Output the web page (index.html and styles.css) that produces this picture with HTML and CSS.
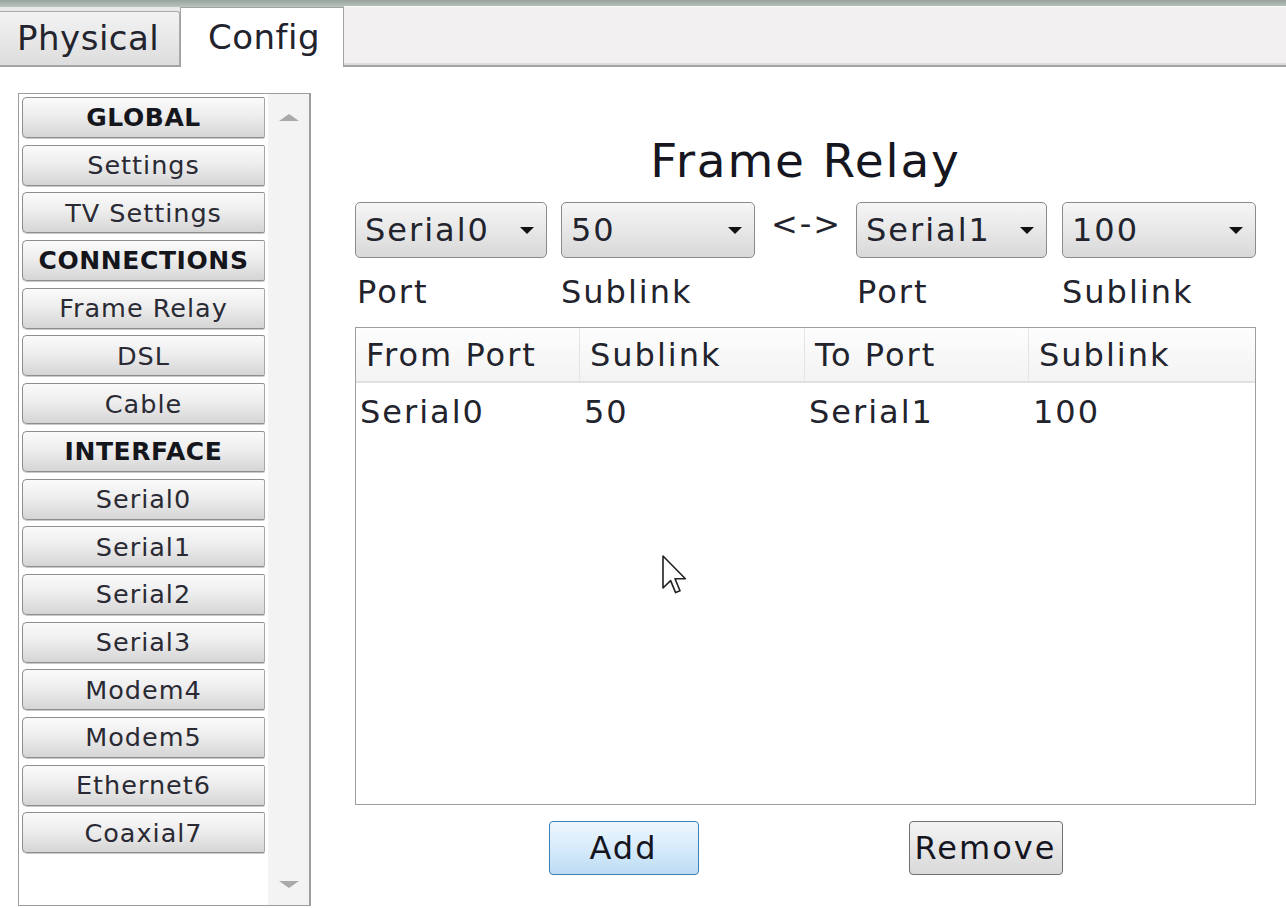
FILE: index.html
```html
<!DOCTYPE html>
<html lang="en">
<head>
<meta charset="utf-8">
<title>Frame Relay - Config</title>
<link rel="stylesheet" href="styles.css">
</head>
<body>
<div class="window">
  <div class="topbar"></div>
  <div class="tabs">
    <div class="tab tab-inactive">Physical</div>
    <div class="tab tab-active">Config</div>
    <div class="tab-filler"></div>
  </div>
  <div class="content">
    <aside class="sidebar">
      <div class="side-list">
        <div class="side-btn head">GLOBAL</div>
        <div class="side-btn">Settings</div>
        <div class="side-btn">TV Settings</div>
        <div class="side-btn head">CONNECTIONS</div>
        <div class="side-btn">Frame Relay</div>
        <div class="side-btn">DSL</div>
        <div class="side-btn">Cable</div>
        <div class="side-btn head">INTERFACE</div>
        <div class="side-btn">Serial0</div>
        <div class="side-btn">Serial1</div>
        <div class="side-btn">Serial2</div>
        <div class="side-btn">Serial3</div>
        <div class="side-btn">Modem4</div>
        <div class="side-btn">Modem5</div>
        <div class="side-btn">Ethernet6</div>
        <div class="side-btn">Coaxial7</div>
      </div>
      <div class="scrollbar">
        <svg class="sb-arrow" width="20" height="7" viewBox="0 0 20 7"><polygon points="10,0 20,7 0,7" fill="#a9a9a9"/></svg>
        <svg class="sb-arrow" width="20" height="7" viewBox="0 0 20 7"><polygon points="0,0 20,0 10,7" fill="#a9a9a9"/></svg>
      </div>
    </aside>
    <main class="panel">
      <h1 class="title">Frame Relay</h1>
      <div class="combo-row">
        <div class="combo w1"><span>Serial0</span><svg class="drop" width="14" height="7" viewBox="0 0 14 7"><polygon points="0,0 14,0 7,7" fill="#111"/></svg></div>
        <div class="combo w2"><span>50</span><svg class="drop" width="14" height="7" viewBox="0 0 14 7"><polygon points="0,0 14,0 7,7" fill="#111"/></svg></div>
        <div class="link-arrow">&lt;-&gt;</div>
        <div class="combo w3"><span>Serial1</span><svg class="drop" width="14" height="7" viewBox="0 0 14 7"><polygon points="0,0 14,0 7,7" fill="#111"/></svg></div>
        <div class="combo w4"><span>100</span><svg class="drop" width="14" height="7" viewBox="0 0 14 7"><polygon points="0,0 14,0 7,7" fill="#111"/></svg></div>
      </div>
      <div class="label-row">
        <span class="lbl w1">Port</span>
        <span class="lbl w2">Sublink</span>
        <span class="lbl spacer"></span>
        <span class="lbl w3">Port</span>
        <span class="lbl w4">Sublink</span>
      </div>
      <div class="grid-table">
        <div class="gt-head">
          <div class="th">From Port</div>
          <div class="th">Sublink</div>
          <div class="th">To Port</div>
          <div class="th">Sublink</div>
        </div>
        <div class="gt-row">
          <div class="td">Serial0</div>
          <div class="td">50</div>
          <div class="td">Serial1</div>
          <div class="td">100</div>
        </div>
      </div>
      <div class="actions">
        <div class="btn btn-add">Add</div>
        <div class="btn btn-remove">Remove</div>
      </div>
    </main>
  </div>
  <svg class="cursor" width="26" height="40" viewBox="0 0 13 20"><path d="M0.5,0.5 L0.5,16.5 L4.3,12.8 L6.8,18.8 L9,17.9 L6.5,11.9 L11.7,11.9 Z" fill="#fff" stroke="#222" stroke-width="0.8" stroke-linejoin="round"/></svg>
</div>
</body>
</html>
```

FILE: styles.css
```css
* { box-sizing: border-box; }

html, body {
  margin: 0;
  padding: 0;
  background: #ffffff;
}

body {
  width: 1286px;
  height: 908px;
  overflow: hidden;
  font-family: "DejaVu Sans", Verdana, sans-serif;
  color: #1d1d26;
}

.window {
  position: relative;
  width: 1286px;
  height: 908px;
  background: #ffffff;
}

.topbar {
  height: 7px;
  background: linear-gradient(#97a39c, #b9c4be);
}

.tabs {
  display: flex;
  align-items: flex-end;
  height: 60px;
  background: #e9e9e9;
  border-bottom: 2px solid #a3a3a3;
}

.tab {
  font-size: 34px;
  letter-spacing: 0.5px;
  color: #22232c;
}

.tab-inactive {
  width: 180px;
  height: 54px;
  padding: 6px 0 0 17px;
  background: linear-gradient(#f3f3f3, #dddddd);
  border: 1px solid #a9a9a9;
  border-left: none;
  border-bottom: none;
  border-radius: 0 3px 0 0;
}

.tab-active {
  width: 164px;
  height: 60px;
  margin-bottom: -2px;
  padding: 9px 0 0 27px;
  background: #ffffff;
  border: 1px solid #a3a3a3;
  border-bottom: none;
}

.tab-filler {
  flex: 1;
  height: 59px;
  background: #f2f0f1;
  border-top: 1px solid #fbfbfb;
  border-bottom: 2px solid #dddddd;
}

.content {
  display: flex;
  padding: 26px 0 0 18px;
}

/* Sidebar */
.sidebar {
  display: flex;
  width: 293px;
  height: 813px;
  border: 1px solid #9d9d9d;
  border-right-width: 2px;
  background: #ffffff;
}

.side-list {
  width: 249px;
  padding: 3px 0 0 3px;
}

.side-btn {
  width: 243px;
  height: 41px;
  margin-bottom: 6.7px;
  display: flex;
  align-items: center;
  justify-content: center;
  font-size: 25.5px;
  letter-spacing: 1px;
  color: #2a2a34;
  background: linear-gradient(#fafafa 0%, #eeeeee 45%, #d5d5d5 100%);
  border: 1px solid #8e8e8e;
  border-right-color: #a7a7a7;
  border-radius: 5px 2px 2px 5px;
  box-shadow: 0 1px 0 #c9c9c9;
}

.side-btn.head {
  font-size: 25px;
  font-weight: bold;
  letter-spacing: 0.6px;
  color: #15151c;
}

.scrollbar {
  flex: 1;
  display: flex;
  flex-direction: column;
  justify-content: space-between;
  align-items: center;
  padding: 20px 0 17px 0;
  background: #f3f3f3;
}

.sb-arrow { display: block; }

/* Main panel */
.panel {
  width: 901px;
  margin-left: 44px;
  display: flex;
  flex-direction: column;
}

.title {
  margin: 38px 0 0 0;
  height: 61px;
  line-height: 60px;
  text-align: center;
  font-size: 47px;
  font-weight: normal;
  letter-spacing: 1.8px;
  color: #161620;
}

.combo-row {
  display: flex;
  margin-top: 10px;
  height: 56px;
}

.w1 { width: 192px; margin-right: 14px; }
.w2 { width: 194px; }
.w3 { width: 191px; margin-right: 15px; }
.w4 { width: 194px; }

.combo {
  display: flex;
  align-items: center;
  justify-content: space-between;
  height: 56px;
  padding: 0 12px 0 9px;
  font-size: 32px;
  letter-spacing: 2px;
  color: #22232c;
  background: linear-gradient(#f6f6f6, #e6e6e6 55%, #d8d8d8);
  border: 1px solid #8b8b8b;
  border-radius: 5px;
}

.drop { display: block; flex: none; }

.link-arrow {
  width: 69px;
  margin: 0 16px;
  height: 44px;
  line-height: 44px;
  font-size: 32px;
  letter-spacing: 2px;
  text-align: center;
  color: #22232c;
  white-space: nowrap;
}

.label-row {
  display: flex;
  margin-top: 14px;
  height: 40px;
  line-height: 40px;
  font-size: 32px;
  letter-spacing: 2px;
  color: #22232c;
}

.lbl.w1 { padding-left: 2px; }
.lbl.w3 { padding-left: 1px; }
.lbl.spacer { width: 69px; margin: 0 16px; }

.grid-table {
  margin-top: 15px;
  height: 478px;
  border: 1px solid #9f9f9f;
  box-shadow: inset 0 1px 0 #d6d6d6;
  background: #ffffff;
}

.gt-head,
.gt-row {
  display: grid;
  grid-template-columns: 224px 225px 224px 1fr;
}

.gt-head {
  height: 55px;
  background: linear-gradient(#fdfdfd, #f3f3f3);
  border-bottom: 2px solid #e0e0e0;
}

.th {
  padding: 2px 0 0 10px;
  line-height: 51px;
  font-size: 32px;
  letter-spacing: 2px;
  color: #22232c;
  border-right: 1px solid #e4e4e4;
}

.th:last-child { border-right: none; }

.gt-row { height: 54px; }

.td {
  padding: 4px 0 0 4px;
  line-height: 50px;
  font-size: 32px;
  letter-spacing: 2px;
  color: #22232c;
}

.actions {
  display: flex;
  justify-content: center;
  gap: 210px;
  margin-top: 16px;
}

.btn {
  height: 54px;
  line-height: 52px;
  text-align: center;
  font-size: 32px;
  letter-spacing: 2px;
  color: #15151f;
  border-radius: 4px;
}

.btn-add {
  width: 150px;
  background: linear-gradient(#eef7fe, #d7ebfb 50%, #bcdcf4);
  border: 1px solid #3f80b4;
}

.btn-remove {
  width: 154px;
  background: linear-gradient(#f4f4f4, #e6e6e6 50%, #d9d9d9);
  border: 1px solid #707070;
}

.cursor {
  position: absolute;
  left: 662px;
  top: 555px;
}
```
